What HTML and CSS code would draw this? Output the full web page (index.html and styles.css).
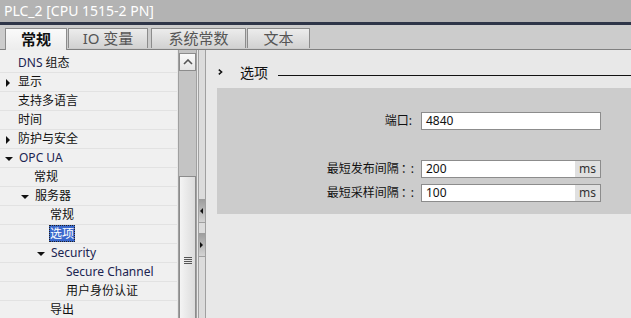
FILE: index.html
```html
<!DOCTYPE html>
<html lang="zh">
<head>
    <meta charset="UTF-8">
    <title>PLC_2 属性</title>
    <link rel="stylesheet" href="styles.css">
</head>
<body>
    <div class="title">PLC_2 [CPU 1515-2 PN]</div>
    <div class="title-rule"></div>
    <div class="tabs">
        <div class="tab active">常规</div>
        <div class="tab io">IO 变量</div>
        <div class="tab sys">系统常数</div>
        <div class="tab text">文本</div>
    </div>

    <div class="main">
        <div class="tree">
            <div class="row lv0"><span class="latin">DNS</span>&nbsp;组态</div>
            <div class="row lv0"><i class="arrow right"></i>显示</div>
            <div class="row lv0">支持多语言</div>
            <div class="row lv0">时间</div>
            <div class="row lv0"><i class="arrow right"></i>防护与安全</div>
            <div class="row lv0"><i class="arrow down"></i><span class="latin">OPC UA</span></div>
            <div class="row lv1">常规</div>
            <div class="row lv1"><i class="arrow down"></i>服务器</div>
            <div class="row lv2">常规</div>
            <div class="row lv2"><span class="selected">选项</span></div>
            <div class="row lv2"><i class="arrow down"></i><span class="latin">Security</span></div>
            <div class="row lv3"><span class="latin">Secure Channel</span></div>
            <div class="row lv3">用户身份认证</div>
            <div class="row lv2">导出</div>
        </div>

        <div class="scrollbar">
            <div class="scroll-up">
                <svg width="10" height="6" viewBox="0 0 10 6"><path d="M1 5 L5 1 L9 5" fill="none" stroke="#555" stroke-width="1.6"/></svg>
            </div>
            <div class="scroll-track"></div>
            <div class="scroll-thumb">
                <div class="grip"><span></span><span></span><span></span><span></span></div>
            </div>
        </div>

        <div class="splitter">
            <div class="split-btn">
                <svg width="4" height="6" viewBox="0 0 4 6"><path d="M3 0 L0 3 L3 6 Z" fill="#111"/></svg>
            </div>
            <div class="split-btn">
                <svg width="4" height="6" viewBox="0 0 4 6"><path d="M0 0 L3 3 L0 6 Z" fill="#111"/></svg>
            </div>
        </div>

        <div class="content">
            <div class="heading">
                <svg class="chev" width="5" height="6" viewBox="0 0 5 6"><path d="M0.8 0.6 L3.6 3 L0.8 5.4" fill="none" stroke="#111" stroke-width="1.5"/></svg>
                <span class="heading-text">选项</span>
                <span class="heading-line"></span>
            </div>
            <div class="section">
                <div class="form">
                    <label>端口:</label>
                    <div class="field"><span class="value">4840</span></div>

                    <div class="spacer"></div>

                    <label>最短发布间隔<span class="colon">：:</span></label>
                    <div class="field"><span class="value">200</span><span class="unit">ms</span></div>

                    <label>最短采样间隔<span class="colon">：:</span></label>
                    <div class="field"><span class="value">100</span><span class="unit">ms</span></div>
                </div>
            </div>
        </div>
    </div>
</body>
</html>
```

FILE: styles.css
```css
* {
    box-sizing: border-box;
}
body {
    margin: 0;
    width: 631px;
    height: 318px;
    overflow: hidden;
    background: #e8e8e8;
    font-family: "Noto Sans", "Noto Sans CJK SC", sans-serif;
    font-size: 12px;
    color: #111;
}
.title {
    height: 22px;
    line-height: 22px;
    padding-left: 4px;
    background: #b3b3b3;
    color: #fff;
    font-size: 14px;
}
.title-rule {
    height: 3px;
    background: #2e3548;
}
.tabs {
    display: flex;
    align-items: flex-end;
    gap: 1px;
    height: 25px;
    padding-left: 5px;
    background: #cccccc;
    border-bottom: 1px solid #808080;
}
.tab {
    height: 20px;
    line-height: 19px;
    margin-bottom: 1px;
    text-align: center;
    white-space: nowrap;
    font-size: 15px;
    color: #555;
    background: linear-gradient(#ececec, #d2d2d2);
    border: 1px solid #8c8c8c;
    border-bottom: none;
}
.tab.io { width: 80px; }
.tab.sys { width: 95px; margin-left: 2px; }
.tab.text { width: 63px; }
.tab.active {
    width: 62px;
    height: 22px;
    line-height: 21px;
    margin-bottom: -1px;
    font-weight: bold;
    color: #111;
    background: linear-gradient(#fafafa, #ececec);
}
.main {
    display: flex;
    height: 268px;
}
.tree {
    width: 177px;
    padding-top: 4px;
    background: #f0f0f0;
}
.row {
    height: 19px;
    line-height: 18px;
    border-bottom: 1px solid #e2e2e2;
    white-space: nowrap;
}
.latin {
    color: #1b2450;
}
.lv0 { padding-left: 18px; }
.lv1 { padding-left: 34px; }
.lv2 { padding-left: 50px; }
.lv3 { padding-left: 66px; }
.arrow {
    display: inline-block;
    width: 0;
    height: 0;
    margin-left: -13px;
    margin-right: 6px;
    vertical-align: middle;
}
.arrow.right {
    margin-left: -12px;
    margin-right: 8px;
    border-top: 4px solid transparent;
    border-bottom: 4px solid transparent;
    border-left: 4px solid #111;
}
.arrow.down {
    border-left: 4px solid transparent;
    border-right: 4px solid transparent;
    border-top: 4px solid #111;
}
.selected {
    margin-left: -1px;
    padding: 0 1px;
    background: #3a68cc;
    color: #fff;
    outline: 1px dotted #222;
    outline-offset: -1px;
}
.scrollbar {
    display: flex;
    flex-direction: column;
    width: 19px;
    margin-left: 1px;
    padding-top: 3px;
    border-left: 1px solid #a0a0a0;
    border-right: 1px solid #a0a0a0;
    background: #c4c4c4;
}
.scroll-up {
    height: 18px;
    display: flex;
    align-items: center;
    justify-content: center;
    background: linear-gradient(#fafafa, #e4e4e4);
    border: 1px solid #8c8c8c;
}
.scroll-track {
    height: 105px;
}
.scroll-thumb {
    flex: 1;
    background: linear-gradient(90deg, #f4f4f4, #dcdcdc);
    border: 1px solid #8c8c8c;
    border-bottom: none;
}
.grip {
    display: flex;
    flex-direction: column;
    gap: 1px;
    width: 8px;
    margin: 80px auto 0;
}
.grip span {
    height: 1px;
    background: #555;
}
.splitter {
    display: flex;
    flex-direction: column;
    gap: 10px;
    width: 8px;
    margin-left: 1px;
    padding-top: 149px;
    background: #dcdcdc;
    border-left: 1px solid #a0a0a0;
    border-right: 1px solid #a0a0a0;
}
.split-btn {
    height: 24px;
    display: flex;
    align-items: center;
    justify-content: center;
    background: linear-gradient(#9c9c9c, #d4d4d4);
    border-bottom: 1px solid #a0a0a0;
}
.content {
    flex: 1;
    padding-left: 11px;
}
.heading {
    display: flex;
    align-items: center;
    height: 38px;
    padding-top: 6px;
}
.chev {
    margin-left: 1px;
}
.heading-text {
    margin-left: 17px;
    font-size: 14px;
}
.heading-line {
    flex: 1;
    height: 1px;
    margin-left: 10px;
    margin-top: 6px;
    background: #111;
}
.section {
    height: 126px;
    background: #cccccc;
}
.form {
    display: grid;
    grid-template-columns: 196px 180px;
    column-gap: 8px;
    row-gap: 6px;
    padding-top: 24px;
}
.form label {
    text-align: right;
    line-height: 18px;
    padding-right: 1px;
}
.colon {
    margin-left: 2px;
    letter-spacing: -2px;
}
.spacer {
    grid-column: 1 / 3;
    height: 18px;
}
.field {
    display: flex;
    height: 18px;
    line-height: 16px;
    background: #fff;
    border: 1px solid #8c8c8c;
}
.value {
    flex: 1;
    padding-left: 4px;
}
.unit {
    width: 25px;
    text-align: center;
    background: #e0e0e0;
    color: #333;
}
```
